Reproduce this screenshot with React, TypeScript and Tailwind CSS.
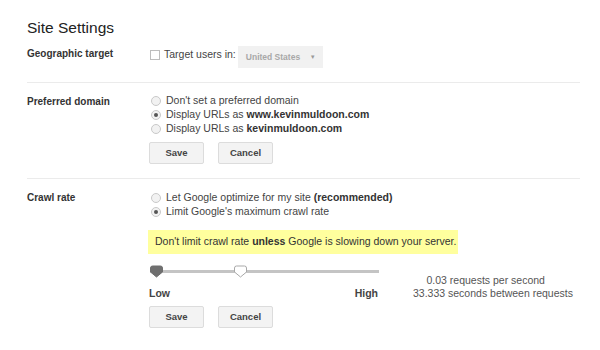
import React from "react";

function Radio({ checked }: { checked?: boolean }) {
  return (
    <span className="inline-flex w-[10px] h-[10px] rounded-full border border-[#c9c9c9] bg-[#f2f2f2] items-center justify-center ml-[2px] mr-[5px] shrink-0">
      {checked && <span className="w-[4px] h-[4px] rounded-full bg-[#555]" />}
    </span>
  );
}

function Btn({ children }: { children: React.ReactNode }) {
  return (
    <div className="w-[55px] h-[22px] flex items-center justify-center border border-[#dcdcdc] bg-[#f3f3f3] text-[9.5px] font-bold text-[#444] rounded-[2px]">
      {children}
    </div>
  );
}

function Thumb({ filled }: { filled?: boolean }) {
  return (
    <svg width="15" height="13" viewBox="0 0 15 13" className="absolute top-[-3px]">
      <path
        d="M1.5 3 Q1.5 1 3.5 1 H11.5 Q13.5 1 13.5 3 V7 L7.5 12 L1.5 7 Z"
        fill={filled ? "#6f6f6f" : "#ffffff"}
        stroke={filled ? "#6f6f6f" : "#a9a9a9"}
        strokeWidth="1"
        strokeLinejoin="round"
      />
    </svg>
  );
}

export default function App() {
  return (
    <div
      className="w-[600px] h-[350px] bg-white text-[#444] overflow-hidden"
      style={{ fontFamily: '"Liberation Sans", Arial, sans-serif' }}
    >
      <div className="pl-[27px] pr-[20px] pt-[18px]">
        <div className="text-[15.5px] text-[#222] leading-[20px]">Site Settings</div>

        {/* Geographic target */}
        <div className="flex h-[45px] pt-[9px] border-b border-[#ebebeb]">
          <div className="w-[122px] text-[10px] leading-[14px] font-bold text-[#333]">Geographic target</div>
          <div className="flex items-start">
            <div className="flex items-center h-[14px] mt-[1px]">
              <span className="w-[10px] h-[10px] border border-[#bdbdbd] bg-white ml-[1px] mr-[4px] inline-block" />
              <span className="text-[10.5px] text-[#444]">Target users in:</span>
            </div>
            <div className="ml-[2px] w-[85px] h-[22px] mt-[-1px] bg-[#f1f1f1] flex items-center justify-between pl-[8px] pr-[7px]">
              <span className="text-[8.5px] font-bold text-[#a8a8a8]">United States</span>
              <span className="text-[6px] text-[#999]">▼</span>
            </div>
          </div>
        </div>

        {/* Preferred domain */}
        <div className="flex pt-[11px] pb-[14px] border-b border-[#ebebeb]">
          <div className="w-[122px] text-[10px] leading-[14px] font-bold text-[#333] pt-[1px]">Preferred domain</div>
          <div className="flex flex-col">
            <div className="flex items-center h-[14px] text-[10.5px]">
              <Radio /> Don't set a preferred domain
            </div>
            <div className="flex items-center h-[14px] text-[10.5px]">
              <Radio checked />
              <span>Display URLs as&nbsp;<b className="text-[#333]">www.kevinmuldoon.com</b></span>
            </div>
            <div className="flex items-center h-[14px] text-[10.5px]">
              <Radio />
              <span>Display URLs as&nbsp;<b className="text-[#333]">kevinmuldoon.com</b></span>
            </div>
            <div className="flex gap-[14px] mt-[6px]">
              <Btn>Save</Btn>
              <Btn>Cancel</Btn>
            </div>
          </div>
        </div>

        {/* Crawl rate */}
        <div className="flex pt-[12px]">
          <div className="w-[122px] text-[10px] leading-[14px] font-bold text-[#333]">Crawl rate</div>
          <div className="flex flex-col">
            <div className="flex items-center h-[14px] text-[10.5px]">
              <Radio />
              <span>Let Google optimize for my site&nbsp;<b className="text-[#333]">(recommended)</b></span>
            </div>
            <div className="flex items-center h-[14px] text-[10.5px]">
              <Radio checked /> Limit Google's maximum crawl rate
            </div>
            <div className="ml-[-1px] mt-[11px] w-[310px] h-[24px] bg-[#ffff9e] flex items-center pl-[7px] text-[10.5px] text-[#333] whitespace-nowrap">
              <span>Don't limit crawl rate&nbsp;<b>unless</b>&nbsp;Google is slowing down your server.</span>
            </div>
            <div className="flex mt-[14px]">
              <div className="flex flex-col w-[230px]">
                <div className="relative h-[8px]">
                  <div className="absolute left-[1px] right-0 top-[2px] h-[3px] bg-[#c4c4c4]" />
                  <div className="absolute left-0"><Thumb filled /></div>
                  <div className="absolute left-[84px]"><Thumb /></div>
                </div>
                <div className="flex justify-between mt-[10px] text-[10.5px] leading-[14px] font-bold text-[#444]">
                  <span>Low</span>
                  <span className="mr-[1px]">High</span>
                </div>
              </div>
              <div className="ml-[34px] mt-[6px] flex flex-col items-end text-[10.5px] text-[#555] leading-[13px]">
                <span className="mr-[28px]">0.03 requests per second</span>
                <span>33.333 seconds between requests</span>
              </div>
            </div>
            <div className="flex gap-[14px] mt-[6px]">
              <Btn>Save</Btn>
              <Btn>Cancel</Btn>
            </div>
          </div>
        </div>
      </div>
    </div>
  );
}
